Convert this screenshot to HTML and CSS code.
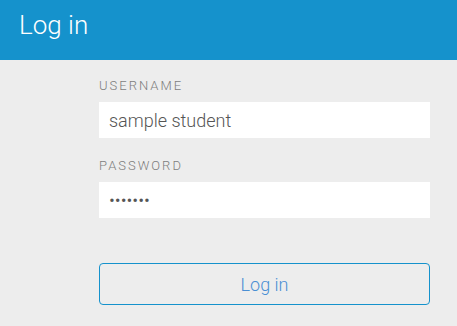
FILE: index.html
```html
<!DOCTYPE html>
<html>
<head>
<meta charset="utf-8">
<link rel="stylesheet" href="styles.css">
</head>
<body>
<header class="topbar"><h1 class="title">Log in</h1></header>
<main class="content">
  <form class="login-form">
    <label class="field">
      <span class="label">Username</span>
      <input class="input" type="text" value="sample student">
    </label>
    <label class="field">
      <span class="label">Password</span>
      <input class="input" type="password" value="secret1">
    </label>
    <button class="btn" type="button">Log in</button>
  </form>
</main>
</body>
</html>
```
FILE: styles.css
```css
html, body {
  margin: 0;
  padding: 0;
  background: #ededed;
  font-family: Roboto, "Liberation Sans", sans-serif;
}
.topbar {
  background: #1592cc;
  height: 60px;
  display: flex;
  align-items: center;
  padding-left: 19px;
  box-sizing: border-box;
}
.title {
  margin: 0;
  font-size: 26px;
  font-weight: 300;
  color: #ffffff;
  line-height: 1;
  margin-top: -10px;
}
.content {
  padding: 18px 27px 0 99px;
}
.login-form {
  display: flex;
  flex-direction: column;
}
.field {
  display: flex;
  flex-direction: column;
  margin-bottom: 8px;
}
.label {
  text-transform: uppercase;
  font-size: 13px;
  font-weight: 300;
  letter-spacing: 2px;
  color: #7d7d7d;
  line-height: 16px;
  margin-bottom: 8px;
}
.input {
  border: none;
  outline: none;
  background: #ffffff;
  height: 36px;
  box-sizing: border-box;
  padding: 0 10px;
  font-family: Roboto, "Liberation Sans", sans-serif;
  font-size: 18px;
  font-weight: 300;
  color: #555555;
  margin-bottom: 12px;
}
.btn {
  margin-top: 25px;
  height: 42px;
  border: 1px solid #1592cc;
  border-radius: 4px;
  background: transparent;
  font-family: Roboto, "Liberation Sans", sans-serif;
  font-size: 18px;
  font-weight: 300;
  color: #4a8fd4;
}
```
